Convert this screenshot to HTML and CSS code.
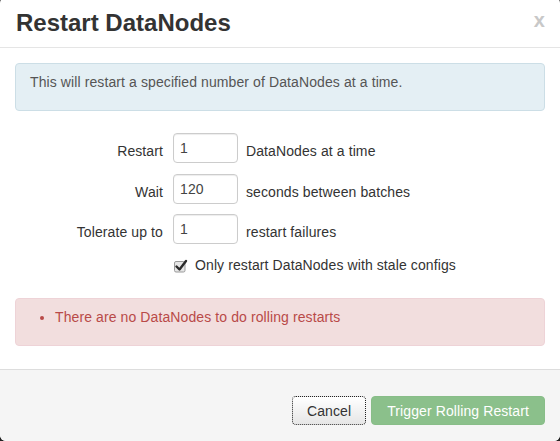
FILE: index.html
```html
<!DOCTYPE html>
<html>
<head>
<meta charset="utf-8">
<title>Restart DataNodes</title>
<link rel="stylesheet" href="styles.css">
</head>
<body>
<div class="modal">
  <div class="modal-header">
    <h3 class="modal-title">Restart DataNodes</h3>
    <span class="close">x</span>
  </div>
  <div class="modal-body">
    <div class="alert alert-info">
      <p>This will restart a specified number of DataNodes at a time.</p>
    </div>
    <form class="form">
      <div class="row">
        <label class="row-label">Restart</label>
        <input class="field" type="text" value="1">
        <span class="row-help">DataNodes at a time</span>
      </div>
      <div class="row">
        <label class="row-label">Wait</label>
        <input class="field" type="text" value="120">
        <span class="row-help">seconds between batches</span>
      </div>
      <div class="row">
        <label class="row-label">Tolerate up to</label>
        <input class="field" type="text" value="1">
        <span class="row-help">restart failures</span>
      </div>
      <div class="check-row">
        <span class="check-box">
          <svg width="16" height="15" viewBox="0 0 16 15">
            <rect x="1.5" y="3.5" width="10.5" height="10.5" rx="1.5" fill="#e6e6e6" stroke="#9a9a9a"/>
            <path d="M3.5 8.5 L6.5 11.5 L13 3" fill="none" stroke="#2a2a2a" stroke-width="2.4" stroke-linecap="round" stroke-linejoin="round"/>
          </svg>
        </span>
        <span class="check-text">Only restart DataNodes with stale configs</span>
      </div>
    </form>
    <div class="alert alert-error">
      <ul>
        <li>There are no DataNodes to do rolling restarts</li>
      </ul>
    </div>
  </div>
  <div class="modal-footer">
    <button class="btn btn-cancel" type="button">Cancel</button>
    <button class="btn btn-success" type="button">Trigger Rolling Restart</button>
  </div>
</div>
</body>
</html>
```
FILE: styles.css
```css
html, body {
  margin: 0;
  padding: 0;
  height: 100%;
  overflow: hidden;
  background: #222;
}

body {
  font-family: "Liberation Sans", Arial, sans-serif;
  font-size: 14px;
  line-height: 20px;
  letter-spacing: 0.1px;
  color: #333;
}

.modal {
  margin-top: -3px;
  background: #fff;
  border-radius: 6px;
  overflow: hidden;
  display: flex;
  flex-direction: column;
}

.modal-header {
  display: flex;
  justify-content: space-between;
  align-items: flex-start;
  padding: 11px 15px 9px 16px;
  border-bottom: 1px solid #e5e5e5;
}

.modal-title {
  margin: 0;
  font-size: 24px;
  line-height: 30px;
  font-weight: bold;
  letter-spacing: 0;
  color: #333;
}

.close {
  margin-top: 2px;
  font-size: 20px;
  line-height: 20px;
  font-weight: bold;
  color: #c8c8c8;
}

.modal-body {
  padding: 15px 15px 23px;
}

.alert {
  border-radius: 4px;
  border: 1px solid;
  padding: 8px 14px;
}

.alert p {
  margin: 0 0 10px;
}

.alert ul {
  margin: 0 0 10px 25px;
  padding: 0;
}

.alert-info {
  background: #e4eff4;
  border-color: #ccdee6;
  color: #555;
  margin-bottom: 22px;
}

.alert-error {
  background: #f2dede;
  border-color: #eed3d7;
  color: #b94a48;
}

.form {
  margin: 0;
}

.row {
  display: flex;
  align-items: flex-start;
  margin-bottom: 10px;
}

.row:first-child {
  margin-bottom: 11px;
}

.row:nth-child(3) {
  margin-bottom: 11px;
}

.row-label {
  width: 148px;
  text-align: right;
  padding-top: 8px;
  margin-right: 10px;
}

.field {
  box-sizing: border-box;
  width: 65px;
  height: 30px;
  padding: 4px 6px;
  margin: 0 8px 0 0;
  border: 1px solid #ccc;
  border-radius: 4px;
  box-shadow: inset 0 1px 1px rgba(0, 0, 0, 0.075);
  font-family: "Liberation Sans", Arial, sans-serif;
  font-size: 14px;
  line-height: 20px;
  letter-spacing: 0.1px;
  color: #444;
  background: #fff;
}

.row-help {
  padding-top: 8px;
}

.check-row {
  display: flex;
  align-items: flex-start;
  margin: 0 0 23px 158px;
}

.check-box {
  width: 16px;
  height: 20px;
  margin-right: 6px;
  display: flex;
  align-items: flex-end;
  padding-bottom: 2px;
  box-sizing: border-box;
}

.check-box svg {
  display: block;
}

.modal-footer {
  flex: 1;
  display: flex;
  justify-content: flex-end;
  gap: 5px;
  padding: 26px 15px 16px;
  background: #f5f5f5;
  border-top: 1px solid #ddd;
}

.btn {
  font-family: "Liberation Sans", Arial, sans-serif;
  font-size: 14px;
  line-height: 20px;
  letter-spacing: 0.1px;
  padding: 4px 15px 3px;
  margin: 0;
  border-radius: 4px;
}

.btn-cancel {
  padding-left: 14px;
  padding-right: 14px;
  color: #333;
  background: linear-gradient(#ffffff, #e6e6e6);
  border: 1px dotted #222;
}

.btn-success {
  color: #fff;
  background: #8bc08b;
  border: 1px solid #88bd88;
}
```
